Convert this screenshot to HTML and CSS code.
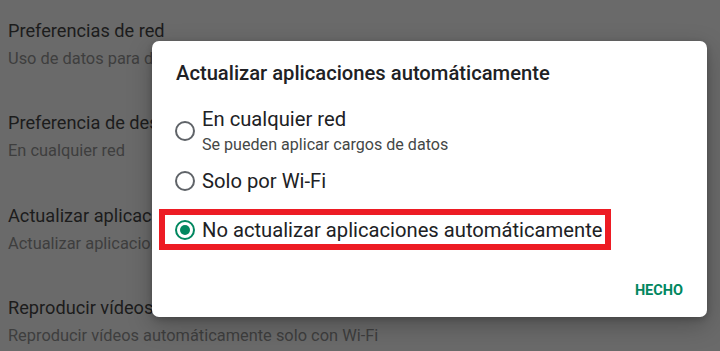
FILE: index.html
```html
<!DOCTYPE html>
<html lang="es">
<head>
<meta charset="utf-8">
<link rel="stylesheet" href="styles.css">
</head>
<body>
<div class="settings">
  <div class="row">
    <div class="row-title">Preferencias de red</div>
    <div class="row-sub">Uso de datos para descargas y actualizaciones</div>
  </div>
  <div class="row">
    <div class="row-title">Preferencia de descarga de aplicaciones</div>
    <div class="row-sub">En cualquier red</div>
  </div>
  <div class="row">
    <div class="row-title">Actualizar aplicaciones automáticamente</div>
    <div class="row-sub">Actualizar aplicaciones solo con Wi-Fi</div>
  </div>
  <div class="row">
    <div class="row-title">Reproducir vídeos automáticamente</div>
    <div class="row-sub">Reproducir vídeos automáticamente solo con Wi-Fi</div>
  </div>
</div>

<div class="dialog">
  <div class="dialog-title">Actualizar aplicaciones automáticamente</div>
  <div class="options">
    <div class="option opt-first">
      <span class="radio"></span>
      <div class="option-text">
        <div class="option-label">En cualquier red</div>
        <div class="option-sub">Se pueden aplicar cargos de datos</div>
      </div>
    </div>
    <div class="option opt-second">
      <span class="radio"></span>
      <div class="option-text">
        <div class="option-label">Solo por Wi-Fi</div>
      </div>
    </div>
    <div class="option opt-third">
      <span class="radio checked"></span>
      <div class="option-text">
        <div class="option-label">No actualizar aplicaciones automáticamente</div>
      </div>
      <span class="highlight"></span>
    </div>
  </div>
  <div class="actions">
    <span class="btn">HECHO</span>
  </div>
</div>
</body>
</html>
```
FILE: styles.css
```css
html, body {
  margin: 0;
  padding: 0;
}
body {
  width: 720px;
  height: 351px;
  overflow: hidden;
  background: #6a6a6a;
  font-family: Roboto, "Liberation Sans", sans-serif;
  position: relative;
}
.settings {
  display: flex;
  flex-direction: column;
  padding-top: 20px;
  height: 351px;
  box-sizing: border-box;
  overflow: hidden;
}
.row {
  flex: none;
  height: 92.33px;
  padding-left: 8px;
  box-sizing: border-box;
  white-space: nowrap;
}
.row-title {
  font-size: 18.2px;
  line-height: 22px;
  color: #1c1c1c;
}
.row-sub {
  font-size: 16.4px;
  line-height: 20px;
  margin-top: 7px;
  color: #3e3e3e;
}
.dialog {
  position: absolute;
  left: 152px;
  top: 41px;
  width: 555px;
  height: 276px;
  background: #fff;
  border-radius: 7px;
  box-shadow: 0 8px 24px rgba(0,0,0,0.25), 0 2px 6px rgba(0,0,0,0.2);
  box-sizing: border-box;
  padding: 19.5px 24px 0 23px;
  color: #1f1f1f;
}
.dialog-title {
  font-size: 20.2px;
  font-weight: 500;
  line-height: 24px;
  color: #202124;
  padding-left: 1px;
  white-space: nowrap;
}
.options {
  display: flex;
  flex-direction: column;
  margin-top: 22.5px;
}
.option {
  display: flex;
  align-items: center;
  position: relative;
}
.radio {
  width: 16px;
  height: 16px;
  border: 2px solid #5f6368;
  border-radius: 50%;
  flex: none;
  margin-right: 7px;
  box-sizing: content-box;
  position: relative;
}
.radio.checked {
  border-color: #01875f;
}
.radio.checked::after {
  content: "";
  position: absolute;
  left: 3px;
  top: 3px;
  width: 10px;
  height: 10px;
  border-radius: 50%;
  background: #01875f;
}
.option-label {
  font-size: 20.2px;
  line-height: 24px;
  color: #202124;
  white-space: nowrap;
}
.option-sub {
  font-size: 16.1px;
  line-height: 20px;
  color: #444746;
  margin-top: 3.5px;
  white-space: nowrap;
}
.opt-second { margin-top: 14px; }
.opt-third { margin-top: 25px; }
.highlight {
  position: absolute;
  left: -16px;
  top: -9px;
  width: 452px;
  height: 41px;
  border: 6px solid #ed1c24;
  box-sizing: border-box;
}
.actions {
  display: flex;
  justify-content: flex-end;
  margin-top: 39.5px;
}
.btn {
  font-size: 14.5px;
  font-weight: 700;
  color: #01875f;
  line-height: 20px;
}
```
